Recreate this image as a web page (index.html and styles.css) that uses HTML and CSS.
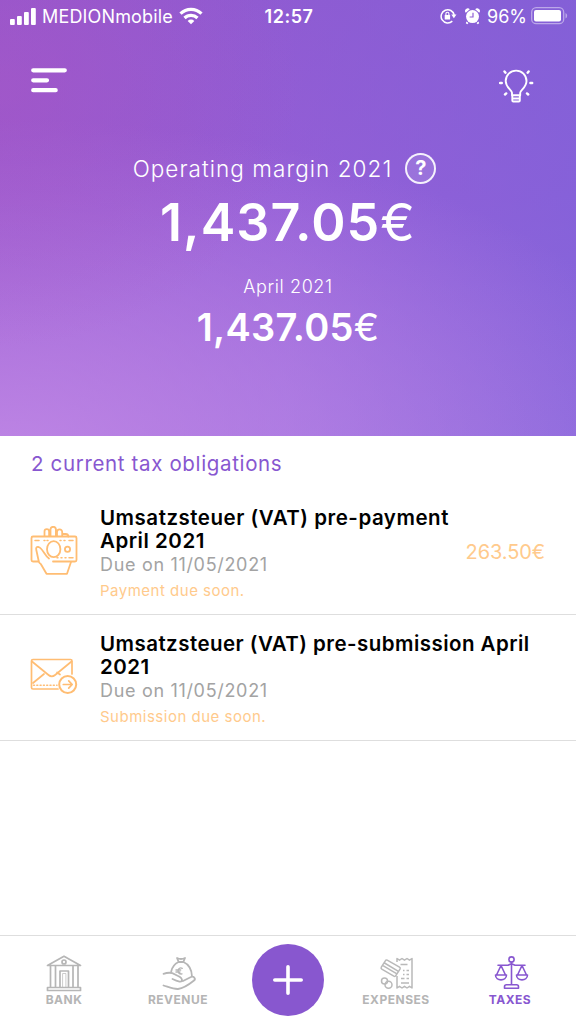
FILE: index.html
```html
<!DOCTYPE html>
<html lang="en">
<head>
<meta charset="utf-8">
<title>Taxes</title>
<link rel="stylesheet" href="styles.css">
</head>
<body>
<div class="screen">
  <header class="hero">
    <div class="status">
      <div class="status-left">
        <svg class="signal" viewBox="0 0 26 17" width="26" height="17" fill="#fff"><rect x="0" y="11" width="4.8" height="6" rx="1"/><rect x="7" y="8" width="4.8" height="9" rx="1"/><rect x="14" y="4" width="4.8" height="13" rx="1"/><rect x="21" y="0" width="4.8" height="17" rx="1"/></svg>
        <span class="carrier">MEDIONmobile</span>
        <svg class="wifi" viewBox="0 0 24 18" width="24" height="18" fill="none" stroke="#fff" stroke-width="3.2"><path d="M1.5 6.7A15 15 0 0 1 22.500 6.700"/><path d="M5.500 11A9.300 9.300 0 0 1 18.500 11"/><path d="M12 17.300 8.700 13.900A4.700 4.700 0 0 1 15.300 13.900Z" fill="#fff" stroke="none"/></svg>
      </div>
      <span class="clock">12:57</span>
      <div class="status-right">
        <svg class="lock" viewBox="0 0 17 16" width="17" height="16" fill="none" stroke="#fff" stroke-width="1.500"><path d="M12.300 13.100A6.600 6.600 0 1 1 14.200 7"/><path d="M11.300 6.500h5.200l-2.600 3.800z" fill="#fff" stroke="none"/><rect x="4.700" y="7" width="5.400" height="4.500" rx=".5" fill="#fff" stroke="none"/><path d="M5.900 7V5.700a1.500 1.500 0 0 1 3 0V7" stroke-width="1.100"/></svg>
        <svg class="alarm" viewBox="0 0 15 17" width="15" height="17"><g fill="#fff"><circle cx="7.500" cy="8.600" r="6.500"/><path d="M.8 4.800a2.600 2.600 0 0 1 4-3.500zM14.200 4.800a2.600 2.600 0 0 0-4-3.500zM1.500 13.500l2 1.400-1.200 1.400-1.500-1zM13.500 13.500l-2 1.400 1.200 1.400 1.500-1z"/></g><path d="M8 4.800V9H4.600" fill="none" stroke="#905fd5" stroke-width="1.200"/></svg>
        <span class="percent">96%</span>
        <svg class="battery" viewBox="0 0 37 18" width="37" height="18"><rect x=".7" y=".7" width="32" height="16" rx="4.500" fill="none" stroke="#fff" stroke-opacity=".45" stroke-width="1.300"/><rect x="3" y="3" width="27" height="11.500" rx="2" fill="#fff"/><path d="M34.500 6v5.500q1.700-.8 1.700-2.750T34.500 6" fill="#fff" opacity=".45"/></svg>
      </div>
    </div>
    <div class="toolbar">
      <svg class="menu" viewBox="0 0 36 25" width="36" height="25" stroke="#fff" stroke-width="4.200" stroke-linecap="round"><path d="M2.200 2.300H33.800M2.200 12.300H16M2.200 22.200H24.700"/></svg>
      <svg class="bulb" viewBox="499 69 35 34" width="35" height="34" fill="none" stroke="#fff" stroke-width="1.900" stroke-linecap="round" stroke-linejoin="round"><path d="M512 95.300v-2.500c0-3-6.300-5-6.300-11.800a10.400 10.400 0 0 1 20.800 0c0 6.800-6.300 8.800-6.300 11.800v2.500z"/><path d="M512.300 96v4.500q0 1 1 1h5.500q1 0 1-1V96M512.500 98.500h7"/><path d="M500 83h1.800M530.400 83h1.800M504.500 71.500l1 1.200M527.600 72.700l1-1.200M505 94.500l1.200-1.100M527 93.400l1.200 1.100" stroke-width="2.400"/></svg>
    </div>
    <div class="margin-row"><span class="margin-label">Operating margin 2021</span><span class="help">?</span></div>
    <div class="amount-large">1,437.05<span class="euro">€</span></div>
    <div class="month">April 2021</div>
    <div class="amount-small">1,437.05<span class="euro">€</span></div>
  </header>
  <main class="content">
    <h2 class="heading">2 current tax obligations</h2>
    <article class="item">
      <svg class="item-icon" viewBox="30 526 48 49" width="48" height="49" fill="none" stroke="#ffbd73" stroke-width="1.800" stroke-linejoin="round" stroke-linecap="round"><path d="M44.500 536v-4.500a2.300 2.300 0 0 1 4.600 0v4.500M50.500 536v-6.500a2.700 2.700 0 0 1 5.400 0v6.500M57 536v-4a2.600 2.600 0 0 1 5.200 0v4M62.200 534h3.300q2.800 0 2.800 2.500"/><path d="M38.500 561.500H33q-1.500 0-1.500-1.500V538q0-1.500 1.500-1.500h42q1.500 0 1.500 1.500V560q0 1.500-1.500 1.500H53"/><path d="M49 558.500c-4.500-3-6.500-10.500-10.500-11.500-2-.4-2.700 1-2.200 3l2.500 11.500q.5 1.800 2 2.500l5.700 9.800H67l4-11.800"/><ellipse cx="53.700" cy="549.200" rx="6.700" ry="8"/><circle cx="67.500" cy="549.200" r="2.600"/><path d="M35 540.500h4M44 540.500h1M47 540.500h1M60 540.500h1M64 540.500h1M69 540.500h4M57 557.800h1M61 557.800h1M65 557.800h1M69 557.800h4" stroke-width="1.500"/></svg>
      <div class="item-body">
        <h3 class="item-title">Umsatzsteuer (VAT) pre-payment<br>April 2021</h3>
        <p class="due">Due on 11/05/2021</p>
        <p class="notice payment">Payment due soon.</p>
      </div>
      <span class="sum">263.50€</span>
    </article>
    <article class="item">
      <svg class="item-icon mail" viewBox="30 657 48 38" width="48" height="38" fill="none" stroke="#ffbd73" stroke-width="1.700" stroke-linejoin="round" stroke-linecap="round"><path d="M58 689H33q-1.500 0-1.500-1.500V661q0-1.500 1.500-1.500h37.500q1.500 0 1.500 1.500v13"/><path d="M32 661.500l16.500 13.500q3.300 2.600 6.600 0L71.500 661.500M33 683l11-9M60 674.500l-3-2"/><path d="M33.500 685.200H57" stroke-width="1.500" stroke-dasharray="1 2.300"/><circle cx="67.700" cy="684.500" r="8.500" stroke-width="2"/><path d="M63.300 684.500h8.500M68.700 680.800l3.500 3.700-3.500 3.700"/></svg>
      <div class="item-body">
        <h3 class="item-title second">Umsatzsteuer (VAT) pre-submission April<br>2021</h3>
        <p class="due">Due on 11/05/2021</p>
        <p class="notice submission">Submission due soon.</p>
      </div>
    </article>
  </main>
  <nav class="tabs">
    <a class="tab bank">
      <svg viewBox="46 954 38 38" width="38" height="38" fill="none" stroke="#b6b6b6" stroke-width="1.700" stroke-linejoin="round"><path d="M48.500 965.500L65 956.300 81.500 965.500zM48.500 987.500h33v3h-33zM51.500 965.500v22M56.500 965.500v22M74 965.500v22M79 965.500v22M61 987.500V971h8.500v16.500"/><path d="M63.600 987.500v-14h3.300v14" stroke-width=".7"/><circle cx="65" cy="962" r="2"/></svg>
      <span>BANK</span>
    </a>
    <a class="tab revenue">
      <svg viewBox="161 954 38 38" width="38" height="38" fill="none" stroke="#b6b6b6" stroke-width="1.800" stroke-linejoin="round" stroke-linecap="round"><path d="M179 958q4 2 8 0l-1.700 4h-4.600zM180.500 962c-4 2-6.500 5.500-7.300 9.500M185.500 962c5 2 8.500 8 8.500 14.500M165.500 973.800c4-1.300 8.500-1.400 11.500.6 2 1.500 4 1.500 6 3.500 2 2 .7 4-1.500 3.700-3-.6-5-1.600-7-2.600M185 981l8-4c3-1.200 5 2 3 3.500-5.200 4.200-10 7.700-16 8.500-5 .2-9.500-2-14.500-3.500"/><path d="M184.200 968.300c-4.200-2.300-6.500 6.200-.2 5.600M178 970h4.700M178 972h4" stroke-width="1.400"/></svg>
      <span>REVENUE</span>
    </a>
    <a class="add"><svg viewBox="0 0 32 32" width="32" height="32" stroke="#fff" stroke-width="3.600" stroke-linecap="round"><path d="M16 2.800v26.400M2.800 16h26.400"/></svg></a>
    <a class="tab expenses">
      <svg viewBox="377 954 38 38" width="38" height="38" fill="none" stroke="#b9b9b9" stroke-width="1.500" stroke-linejoin="round"><path d="M397 962v-3.500l2.500 1.700 2.500-1.700 2.500 1.700 2.500-1.700 2.500 1.700 2.500-1.700v29.500l-2.500-1.700-2.500 1.700-2.500-1.700-2.500 1.700-2.500-1.700-2.500 1.700v-12"/><path d="M387.200 960.200l12.300 7q1.200.8.500 2l-4.200 6.500q-.7 1.200-2 .5l-12-7q-1.200-.8-.5-2l4-6.300q.7-1.300 1.900-.7zM384.500 963l13.500 8.200M383 965.700l13.500 8"/><circle cx="384.500" cy="981" r="3"/><circle cx="388.500" cy="984.700" r="3.500"/><path d="M400.500 964.500h7M403 970.500h1.500M406.500 970.500h2.500M403 974.500h1.500M406.500 974.500h2.500M401 978.500h3.500M406.500 978.500h2.500M401 983h8"/></svg>
      <span>EXPENSES</span>
    </a>
    <a class="tab taxes">
      <svg viewBox="491 954 38 38" width="38" height="38" fill="none" stroke="#8857d0" stroke-width="1.600" stroke-linejoin="round" stroke-linecap="round"><circle cx="511.500" cy="959.500" r="2.600"/><path d="M511.500 962.200v22M498 965.200h10l3.500-1.500 3.500 1.500h10M501 965.500l-4.500 9.500M501 965.500l4.500 9.500M522 965.500l-4.500 9.500M522 965.500l4.500 9.500M495.500 975h11c0 6.500-11 6.500-11 0zM516.500 975h11c0 6.500-11 6.500-11 0zM504.500 988.200v-1.500q0-2 2-2h10q2 0 2 2v1.500z"/></svg>
      <span>TAXES</span>
    </a>
  </nav>
</div>
</body>
</html>
```

FILE: styles.css
```css
* { box-sizing: border-box; }
body { margin: 0; font-family: Inter, "Liberation Sans", sans-serif; background: #fff; }
h2, h3, p { margin: 0; font-weight: 400; }
svg { display: block; flex: none; }
span { white-space: nowrap; }
.screen { width: 576px; height: 1024px; display: flex; flex-direction: column; overflow: hidden; }

.hero {
  height: 436px;
  flex: none;
  color: #fff;
  display: flex;
  flex-direction: column;
  align-items: center;
  background:
    radial-gradient(ellipse 300px 260px at 0 20%, rgba(170, 88, 196, .5), rgba(170, 88, 196, 0)),
    radial-gradient(ellipse 700px 340px at 0 105%, rgba(196, 140, 232, .85), rgba(196, 140, 232, 0)),
    linear-gradient(90deg, rgba(152, 84, 204, .7) 0%, rgba(146, 94, 214, .4) 50%, rgba(128, 98, 218, .7) 100%),
    linear-gradient(180deg, #8c5ad0 0%, #945fd7 45%, #a077e2 100%);
}
.status { align-self: stretch; height: 32px; display: grid; grid-template-columns: 1fr auto 1fr; align-items: center; padding: 0 8px 0 10px; }
.status-left, .status-right { display: flex; align-items: center; }
.status-right { justify-content: flex-end; }
.carrier { font-size: 18px; margin-left: 6px; width: 131px; letter-spacing: .15px; }
.wifi { margin-left: 6px; }
.clock { font-size: 18px; font-weight: 600; letter-spacing: .55px; }
.percent { font-size: 18px; margin: 0 4px 0 7px; letter-spacing: 0; }
.alarm { margin-left: 8px; }

.toolbar { align-self: stretch; display: flex; justify-content: space-between; padding: 36px 42px 0 31px; height: 118px; }
.bulb { margin-top: 1px; }
.margin-row { display: flex; align-items: center; height: 36px; gap: 13px; margin-right: 7px; }
.margin-label { font-size: 22.5px; font-weight: 350; letter-spacing: 1.05px; }
.help { width: 31px; height: 31px; border: 2px solid rgba(255, 255, 255, .9); border-radius: 50%; background: rgba(255, 255, 255, .12); font-size: 20px; font-weight: 700; line-height: 27px; text-align: center; }
.amount-large { font-size: 52px; font-weight: 600; line-height: 62px; margin-top: 6px; letter-spacing: 1.05px; }
.amount-small { font-size: 38px; font-weight: 600; line-height: 46px; margin-top: 5px; letter-spacing: .25px; }
.euro { font-weight: 400; }
.month { font-size: 18px; font-weight: 350; line-height: 24px; margin-top: 21px; letter-spacing: .6px; }

.content { flex: 1; }
.heading { font-size: 20.5px; line-height: 28px; padding: 14px 31px 0; height: 53px; color: #8857d0; letter-spacing: .65px; }
.item { height: 126px; display: flex; align-items: flex-start; border-bottom: 1px solid #dedede; padding: 17px 31px 0 30px; }
.item-icon { margin-top: 20px; }
.mail { margin-top: 25px; }
.item-body { flex: 1; margin-left: 22px; white-space: nowrap; }
.item-title { font-size: 20.5px; line-height: 23px; font-weight: 600; color: #000; letter-spacing: .52px; }
.second { letter-spacing: .46px; }
.due { font-size: 18px; line-height: 24px; margin-top: 1px; color: #a3a3a3; letter-spacing: .68px; }
.notice { font-size: 15px; line-height: 20px; margin-top: 4px; color: #ffca8c; letter-spacing: .5px; }
.sum { font-size: 20px; line-height: 24px; color: #ffca8c; margin-top: 34px; letter-spacing: -.1px; }

.tabs { height: 89px; flex: none; border-top: 1px solid #dedede; display: grid; grid-template-columns: 128px 100px 120px 96px 132px; justify-items: center; }
.tab { display: flex; flex-direction: column; align-items: center; padding-top: 18px; color: #b5b5b5; font-size: 12px; font-weight: 700; line-height: 16px; letter-spacing: .5px; }
.taxes { color: #8857d0; }
.add { width: 72px; height: 72px; margin-top: 8px; border-radius: 50%; background: #8857cf; display: flex; align-items: center; justify-content: center; }
```
